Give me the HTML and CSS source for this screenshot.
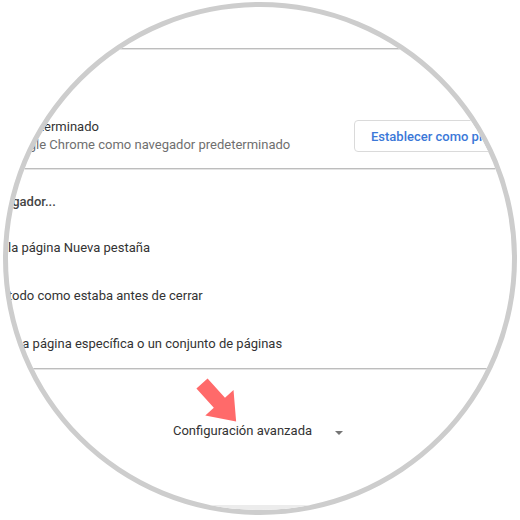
FILE: index.html
```html
<!DOCTYPE html>
<html>

<head>
    <meta charset="utf-8">
    <title>Configuración</title>
    <link rel="stylesheet" href="styles.css">
</head>

<body>
    <div class="frame">
        <div class="lens">
            <div class="page">
                <div class="card card-prev"></div>
                <div class="section-gap"></div>

                <div class="card">
                    <div class="row-default">
                        <div class="row-text">
                            <div class="row-title">Navegador predeterminado</div>
                            <div class="row-sub">Establecer Google Chrome como navegador predeterminado</div>
                        </div>
                        <div>
                            <button class="btn">Establecer como predeterminado</button>
                        </div>
                    </div>
                </div>

                <h2 class="section-title">Al abrir el navegador...</h2>
                <div class="card">
                    <label class="radio-row"><span class="radio"></span>Abrir la página Nueva pestaña</label>
                    <label class="radio-row"><span class="radio"></span>Abrir todo como estaba antes de cerrar</label>
                    <label class="radio-row"><span class="radio"></span>Abrir una página específica o un conjunto de páginas</label>
                </div>

                <div class="advanced">
                    <span>Configuración avanzada</span>
                    <span class="caret"></span>
                </div>
                <div class="page-foot"></div>
            </div>
        </div>

        <!-- red pointer over the advanced settings link -->
        <svg class="arrow" width="520" height="520" viewBox="0 0 520 520">
            <path d="M0 -7.5 H26 V-19 L51 0 L26 19 V7.5 H0 Z" transform="translate(202 381.5) rotate(48)" fill="#ff6a6a" />
        </svg>
    </div>
</body>

</html>
```

FILE: styles.css
```css
/* vars */
:root {
    --ring: #cdcdcd;
    --line: #bdbdbd;
    --text: #333333;
    --text-sub: #6f6f6f;
    --blue: #3b78d8;
}

html {
    font-family: Roboto, "Liberation Sans", sans-serif;
    font-size: 13px;
}

body {
    margin: 0;
    background: white;
}

.frame {
    position: relative;
    width: 520px;
    height: 520px;
}

.lens {
    box-sizing: border-box;
    width: 514px;
    height: 513px;
    margin: 2px 0 0 3px;
    border: 5px solid var(--ring);
    border-radius: 50%;
    overflow: hidden;
    background: white;
}

.page {
    width: 684px;
    margin-left: -92px;
    color: var(--text);
    line-height: 18px;
}

.card-prev {
    height: 41px;
    border-bottom: 1px solid var(--line);
    box-shadow: 0 1px 0 #e4e4e4;
}

.section-gap {
    height: 55px;
}

.row-default {
    display: grid;
    grid-template-columns: 413px auto;
    align-items: center;
    height: 64px;
    padding-left: 25px;
    border-bottom: 1px solid var(--line);
    box-shadow: 0 1px 0 #e4e4e4;
}

.row-sub {
    color: var(--text-sub);
}

.btn {
    height: 32px;
    padding: 0 16px;
    border: 1px solid #dadada;
    border-radius: 4px;
    background: white;
    color: var(--blue);
    font-family: inherit;
    font-size: 13px;
    font-weight: 500;
}

.section-title {
    margin: 0;
    padding: 24px 0 13px 10px;
    font-size: 13px;
    font-weight: 500;
    color: #444;
}

.section-title+.card {
    border-bottom: 1px solid var(--line);
    box-shadow: 0 1px 0 #e4e4e4;
}

.radio-row {
    display: flex;
    align-items: center;
    height: 48px;
    padding-left: 20px;
}

.radio {
    box-sizing: border-box;
    width: 16px;
    height: 16px;
    margin-right: 25px;
    border: 2px solid #5a5a5a;
    border-radius: 50%;
}

.advanced {
    display: flex;
    justify-content: center;
    align-items: flex-start;
    gap: 23px;
    height: 136px;
    padding-top: 44px;
    box-sizing: border-box;
}

.advanced span:first-child {
    padding-top: 9px;
}

.caret {
    width: 0;
    height: 0;
    margin-top: 18px;
    border-left: 4px solid transparent;
    border-right: 4px solid transparent;
    border-top: 4px solid #757575;
}

.page-foot {
    height: 20px;
    background: #ececec;
}

.arrow {
    position: absolute;
    left: 0;
    top: 0;
    pointer-events: none;
}
```
